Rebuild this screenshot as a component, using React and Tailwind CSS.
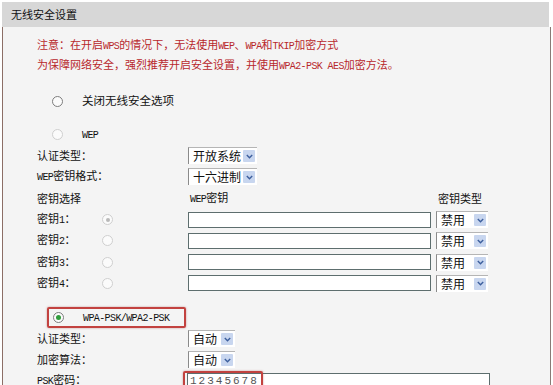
import React from "react";

const L = ({ children }) => (
  <span className="font-['Liberation_Mono',monospace] text-[10px] leading-none tracking-[-0.6px]">{children}</span>
);

const Radio = ({ state }) => {
  const border =
    state === "off" || state === "green" ? "border-[#7d7d7d]" : "border-[#cfcfcf]";
  return (
    <span
      className={`relative inline-flex h-[11px] w-[11px] shrink-0 items-center justify-center rounded-full border ${border} bg-[#fbfbfb]`}
    >
      {state === "disabledOn" && <span className="h-[4px] w-[4px] rounded-full bg-[#b9b9b9]" />}
      {state === "green" && <span className="h-[5px] w-[5px] rounded-full bg-[#2f9d3c]" />}
    </span>
  );
};

const Arrow = () => (
  <span className="flex h-[12px] w-[12px] items-center justify-center bg-[#c8d6ef] rounded-[1px]">
    <svg width="7" height="5" viewBox="0 0 7 5">
      <polyline points="0.8,1 3.5,3.8 6.2,1" fill="none" stroke="#3d5f9e" strokeWidth="1.4" />
    </svg>
  </span>
);

const Select = ({ text, w }) => (
  <div
    className={`flex h-[17px] items-center justify-between border-l border-t border-l-[#8a8a8a] border-t-[#b5b5b5] bg-white pl-[4px] pr-[2px] text-[12px] leading-none text-[#111] ${w}`}
  >
    <span>{text}</span>
    <Arrow />
  </div>
);

const Input = ({ w }) => <div className={`h-[16px] border border-[#5d6e6e] bg-white ${w}`} />;

const Row = ({ h = "h-[21.3px]", children }) => (
  <div className={`flex items-center overflow-visible ${h}`}>{children}</div>
);

const Line = ({ children }) => (
  <div className="flex h-[20px] items-center whitespace-nowrap">
    <span className="leading-none">{children}</span>
  </div>
);

export default function App() {
  return (
    <div className="h-[385px] w-[553px] overflow-hidden bg-white font-['Noto_Sans_CJK_SC',sans-serif] text-[11px] text-[#111]">
      <div className="ml-[2px] mt-[2px] w-[549px]">
        <div className="mr-[2px] flex h-[25px] items-center bg-[#d7d7d7] pl-[9px] text-[11px] text-[#111]">
          无线安全设置
        </div>
        <div className="h-[400px] border-l border-r border-l-[#8c6e66] border-r-[#8a7a76] bg-[#f4f4f4] pl-[34px] pt-[8px]">
          <div className="text-[#b8282c]">
            <Line>
              注意：在开启<L>WPS</L>的情况下，无法使用<L>WEP</L>、<L>WPA</L>和<L>TKIP</L>加密方式
            </Line>
            <Line>
              为保障网络安全，强烈推荐开启安全设置，并使用<L>WPA2-PSK AES</L>加密方法。
            </Line>
          </div>

          <div className="mt-[16px] flex h-[20px] items-center pl-[15px]">
            <Radio state="off" />
            <span className="ml-[19px] text-[11.5px] leading-none">关闭无线安全选项</span>
          </div>

          <div className="mt-[13px] flex h-[20px] items-center pl-[15px]">
            <Radio state="disabled" />
            <span className="ml-[19px] leading-none">
              <L>WEP</L>
            </span>
          </div>

          <div className="mt-[1px]">
            <Row>
              <span className="w-[151px] leading-none">认证类型：</span>
              <Select text="开放系统" w="w-[69px]" />
            </Row>
            <Row>
              <span className="w-[151px] leading-none">
                <L>WEP</L>密钥格式：
              </span>
              <Select text="十六进制" w="w-[69px]" />
            </Row>
            <Row>
              <span className="w-[153px] leading-none">密钥选择</span>
              <span className="w-[248px] leading-none">
                <L>WEP</L>密钥
              </span>
              <span className="leading-none">密钥类型</span>
            </Row>
            {["1", "2", "3", "4"].map((n, i) => (
              <Row key={n}>
                <span className="w-[65px] leading-none">
                  密钥<L>{n}</L>：
                </span>
                <Radio state={i === 0 ? "disabledOn" : "disabled"} />
                <span className="w-[75px]" />
                <Input w="w-[243px]" />
                <span className="w-[5px]" />
                <Select text="禁用" w="w-[52px]" />
              </Row>
            ))}
          </div>

          <div className="mt-[13px] ml-[10px] flex h-[21px] w-[139px] items-center rounded-[2px] border-2 border-[#c2423f] pl-[4px] shadow-[0_0_2px_rgba(150,40,40,0.5)]">
            <Radio state="green" />
            <span className="ml-[19px] leading-none">
              <L>WPA-PSK/WPA2-PSK</L>
            </span>
          </div>

          <Row h="h-[21px]">
            <span className="w-[151px] leading-none">认证类型：</span>
            <Select text="自动" w="w-[47px]" />
          </Row>
          <Row h="h-[21px]">
            <span className="w-[151px] leading-none">加密算法：</span>
            <Select text="自动" w="w-[47px]" />
          </Row>
          <div className="flex h-[21px] items-start pt-[3px]">
            <span className="mt-[1px] w-[150px] leading-none">
              <L>PSK</L>密码：
            </span>
            <div className="relative">
              <div className="h-[16px] w-[303px] border border-[#5d6e6e] bg-white pl-[2px] font-['Liberation_Mono',monospace] text-[11px] leading-[14px] tracking-[2px] text-[#555]">
                12345678
              </div>
              <div className="absolute left-[-4px] top-[-2px] h-[22px] w-[80px] rounded-[2px] border-2 border-[#c2423f] shadow-[0_0_2px_rgba(150,40,40,0.5)]" />
            </div>
          </div>
        </div>
      </div>
    </div>
  );
}
